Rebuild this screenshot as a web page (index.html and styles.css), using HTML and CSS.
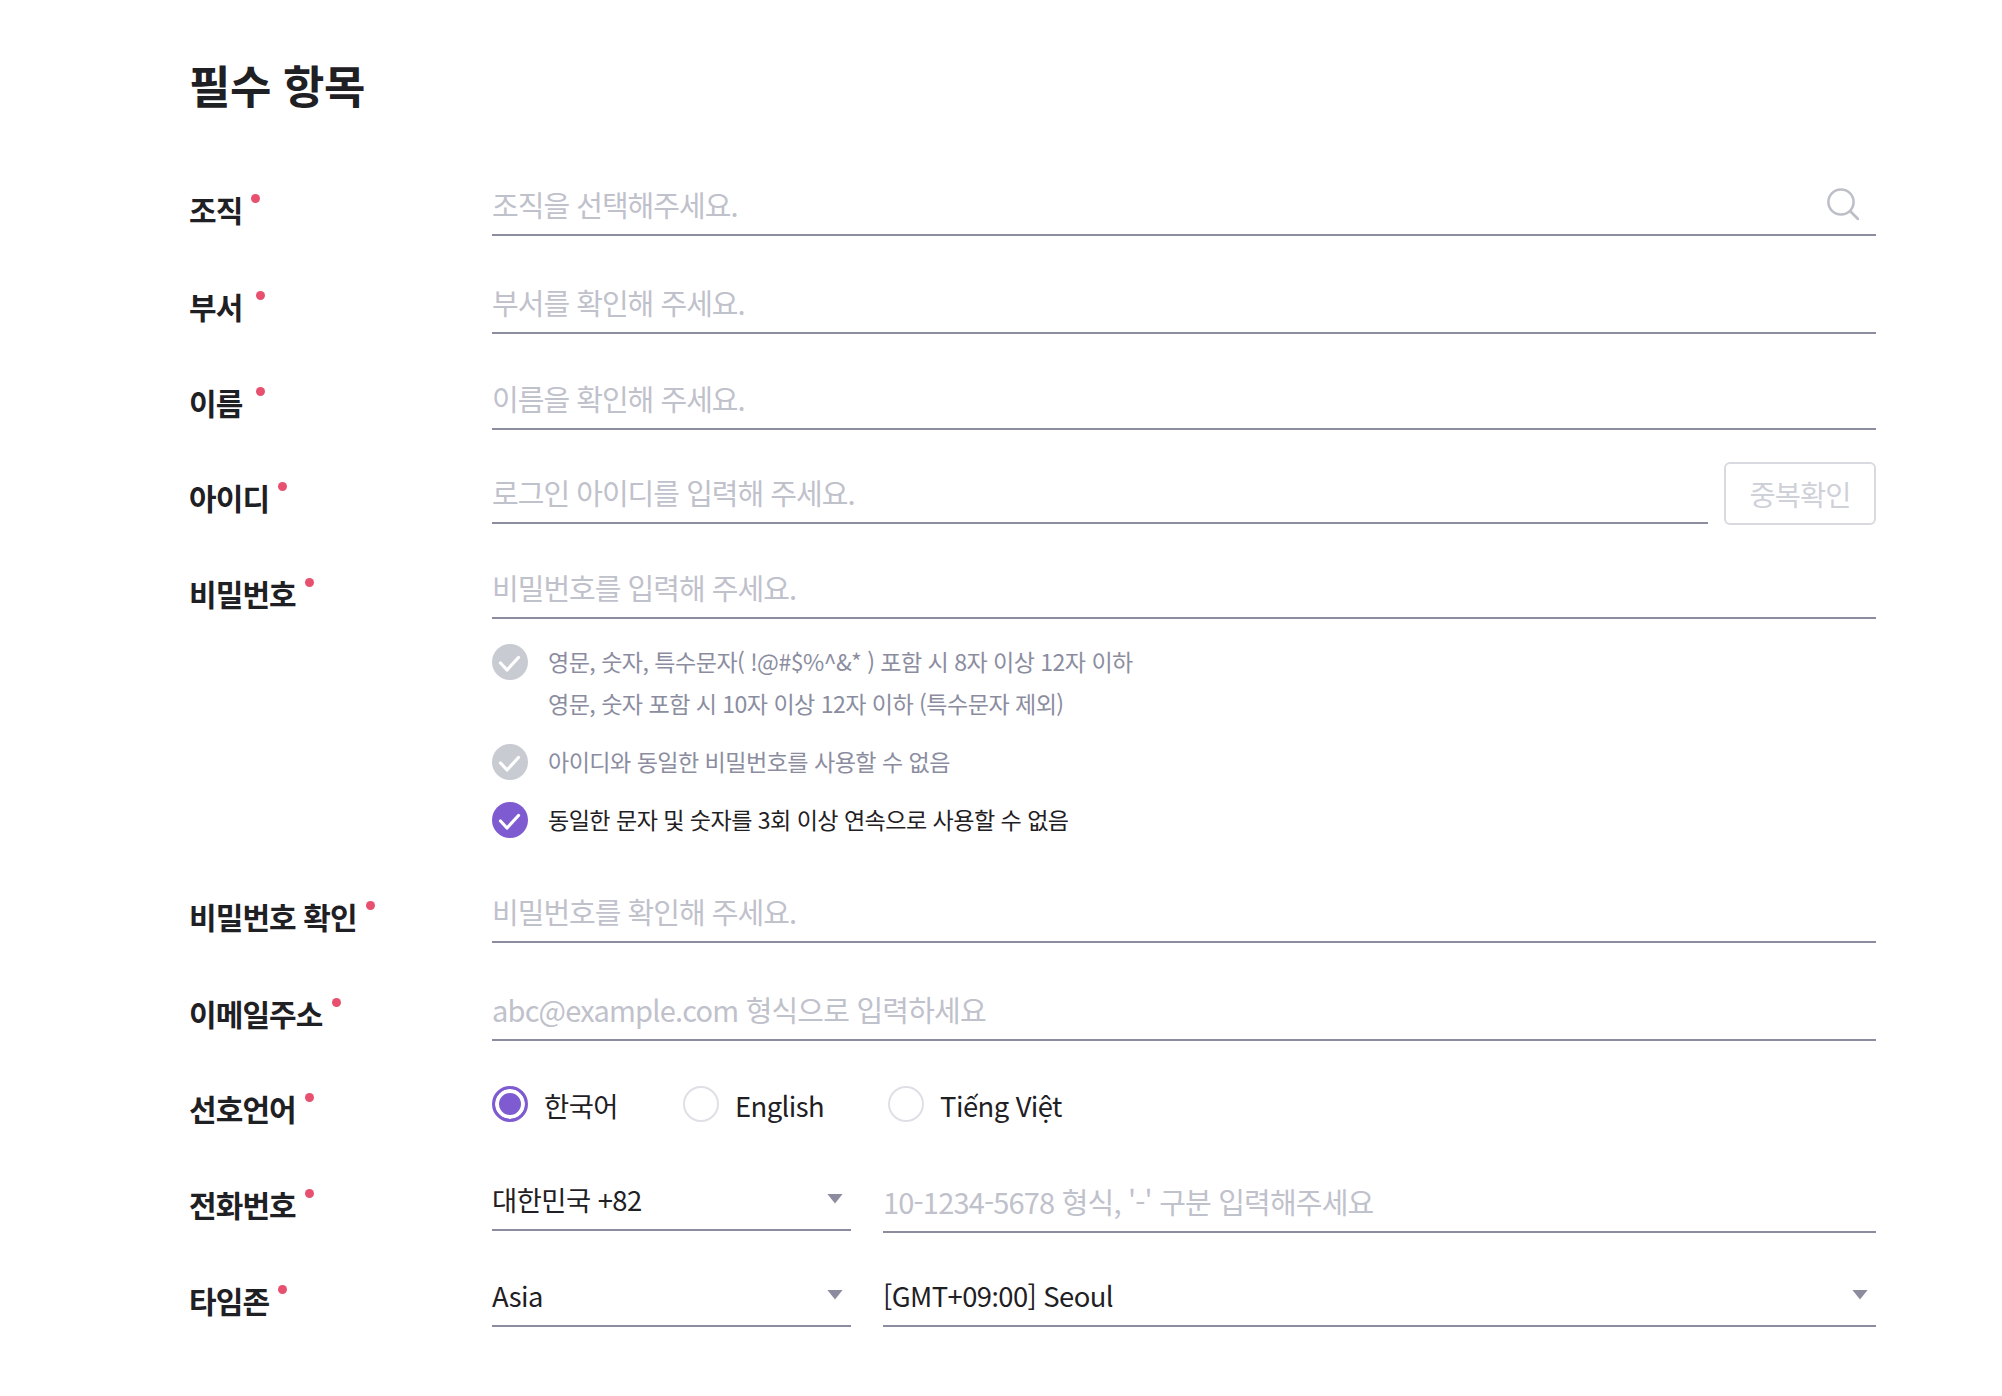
FILE: index.html
```html
<!DOCTYPE html>
<html lang="ko">
<head>
<meta charset="utf-8">
<title>필수 항목</title>
<link rel="stylesheet" href="styles.css">
</head>
<body>
<main class="page">
  <h1 class="title">필수 항목</h1>
  <form class="form">
    <label class="label">조직<i class="req"></i></label>
    <div class="field">
      <input class="input" placeholder="조직을 선택해주세요.">
      <svg class="search" viewBox="0 0 32 32" width="32" height="32"><circle cx="14" cy="14" r="12.6" fill="none" stroke="#bcbec8" stroke-width="2.5"/><path d="M23.5 23.5 31 31" fill="none" stroke="#bcbec8" stroke-width="2.8" stroke-linecap="round"/></svg>
    </div>

    <label class="label up1">부서 <i class="req near"></i></label>
    <div class="field"><input class="input" placeholder="부서를 확인해 주세요."></div>

    <label class="label up1">이름 <i class="req near"></i></label>
    <div class="field"><input class="input" placeholder="이름을 확인해 주세요."></div>

    <label class="label">아이디<i class="req"></i></label>
    <div class="pair pair-btn">
      <div class="field grow"><input class="input" placeholder="로그인 아이디를 입력해 주세요."></div>
      <button type="button" class="btn">중복확인</button>
    </div>

    <label class="label down1">비밀번호<i class="req"></i></label>
    <div class="field"><input class="input" placeholder="비밀번호를 입력해 주세요."></div>

    <ul class="hints">
      <li class="hint">
        <svg class="check" viewBox="0 0 36 36" width="36" height="36"><circle cx="18" cy="18" r="18" fill="#c9cbd3"/><path d="M8.5 19 15 26 26.5 13.5" fill="none" stroke="#fff" stroke-width="3.2" stroke-linecap="round" stroke-linejoin="round"/></svg>
        <p>영문, 숫자, 특수문자( !@#$%^&amp;* ) 포함 시 8자 이상 12자 이하<br>영문, 숫자 포함 시 10자 이상 12자 이하 (특수문자 제외)</p>
      </li>
      <li class="hint">
        <svg class="check" viewBox="0 0 36 36" width="36" height="36"><circle cx="18" cy="18" r="18" fill="#c9cbd3"/><path d="M8.5 19 15 26 26.5 13.5" fill="none" stroke="#fff" stroke-width="3.2" stroke-linecap="round" stroke-linejoin="round"/></svg>
        <p>아이디와 동일한 비밀번호를 사용할 수 없음</p>
      </li>
      <li class="hint ok">
        <svg class="check" viewBox="0 0 36 36" width="36" height="36"><circle cx="18" cy="18" r="18" fill="#7e5bd0"/><path d="M8.5 19 15 26 26.5 13.5" fill="none" stroke="#fff" stroke-width="3.2" stroke-linecap="round" stroke-linejoin="round"/></svg>
        <p>동일한 문자 및 숫자를 3회 이상 연속으로 사용할 수 없음</p>
      </li>
    </ul>

    <label class="label">비밀번호 확인<i class="req"></i></label>
    <div class="field"><input class="input" placeholder="비밀번호를 확인해 주세요."></div>

    <label class="label up1">이메일주소<i class="req"></i></label>
    <div class="field"><input class="input latin" placeholder="abc@example.com 형식으로 입력하세요"></div>

    <label class="label up2">선호언어<i class="req"></i></label>
    <div class="radios">
      <span class="radio on"><i class="dot"></i>한국어</span>
      <span class="radio en"><i class="dot"></i>English</span>
      <span class="radio"><i class="dot"></i>Tiếng Việt</span>
    </div>

    <label class="label up2">전화번호<i class="req"></i></label>
    <div class="pair">
      <div class="field select short raised"><span>대한민국 +82</span><i class="arrow"></i></div>
      <div class="field grow"><input class="input latin" placeholder="10-1234-5678 형식, '-' 구분 입력해주세요"></div>
    </div>

    <label class="label">타임존<i class="req"></i></label>
    <div class="pair">
      <div class="field select short"><span>Asia</span><i class="arrow"></i></div>
      <div class="field select grow"><span>[GMT+09<span class="colon">:</span>00] Seoul</span><i class="arrow"></i></div>
    </div>
  </form>
</main>
</body>
</html>
```

FILE: styles.css
```css
* { box-sizing: border-box; }
html, body { margin: 0; background: #fff; }
body {
  font-family: "Noto Sans CJK KR", "Noto Sans", sans-serif;
  color: #1f2024;
  letter-spacing: -0.035em;
}
.page { width: 2002px; height: 1396px; padding-left: 189px; padding-right: 126px; }
.title {
  margin: 0;
  height: 140px;
  padding-top: 55px;
  font-size: 45px;
  line-height: 60px;
  font-weight: 700;
  letter-spacing: -0.01em;
}
.form {
  display: grid;
  grid-template-columns: 303px 1fr;
  grid-template-rows: 96px 98px 96px 94px 95px 228px 96px 98px 96px 96px 94px;
}
.label {
  align-self: end;
  display: flex;
  align-items: flex-start;
  height: 40px;
  margin-bottom: 7px;
  font-size: 30px;
  line-height: 40px;
  font-weight: 700;
  letter-spacing: -0.03em;
  white-space: pre;
}
.label.up1 { margin-bottom: 8px; }
.label.up2 { margin-bottom: 9px; }
.label.down1 { margin-bottom: 6px; }
.req {
  width: 9px;
  height: 9px;
  margin: 5px 0 0 9px;
  border-radius: 50%;
  background: #e8506f;
}
.req.near { margin-left: 6.5px; }
.field {
  align-self: end;
  display: flex;
  align-items: center;
  height: 60px;
  border-bottom: 2px solid #8b8d9f;
}
.input {
  flex: 1;
  min-width: 0;
  height: 100%;
  padding: 0 0 2px;
  border: 0;
  outline: 0;
  background: none;
  font: inherit;
  font-size: 29px;
  letter-spacing: -0.034em;
  color: inherit;
}
.input.latin { letter-spacing: -0.028em; }
.input::placeholder { color: #bfc1cb; opacity: 1; }
.search { flex: none; margin: 0 17px 3px 0; }
.pair { align-self: end; display: flex; align-items: flex-end; gap: 32px; }
.pair-btn { gap: 16px; }
.grow { flex: 1; }
.short { flex: none; width: 359px; }
.raised { margin-bottom: 2px; }
.btn {
  flex: none;
  width: 152px;
  height: 63px;
  margin-bottom: -1px;
  padding: 0;
  border: 2px solid #d8dae0;
  border-radius: 6px;
  background: #fff;
  font: inherit;
  font-size: 28.5px;
  letter-spacing: -0.035em;
  color: #cfd1d9;
}
.select { justify-content: space-between; padding-bottom: 3px; font-size: 27.4px; }
.colon { font-family: "Noto Sans", sans-serif; }
.arrow {
  flex: none;
  width: 16px;
  height: 10px;
  margin-right: 8px;
  background: #8b8d9f;
  clip-path: polygon(0 0, 100% 0, 50% 100%);
}
.hints {
  grid-column: 2;
  display: flex;
  flex-direction: column;
  gap: 16px;
  margin: 0;
  padding: 22px 0 0;
  list-style: none;
}
.hint {
  display: flex;
  gap: 20px;
  font-size: 23.1px;
  line-height: 42px;
  color: #8b8d9f;
}
.hint p { margin: -1px 0 1px; }
.hint.ok { color: #1f2024; }
.check { flex: none; margin-top: 3px; }
.radios {
  align-self: end;
  display: flex;
  align-items: center;
  height: 60px;
  margin-bottom: 2px;
  font-size: 27.4px;
}
.radio { display: flex; align-items: center; gap: 16px; margin-right: 65px; }
.radio.en { margin-right: 64px; }
.dot {
  width: 36px;
  height: 36px;
  margin-top: -2px;
  border: 2px solid #dfe0e6;
  border-radius: 50%;
  background: #fff;
}
.radio.on .dot {
  border: 3px solid #7e5bd0;
  background: #7e5bd0;
  box-shadow: inset 0 0 0 4px #fff;
}
```
